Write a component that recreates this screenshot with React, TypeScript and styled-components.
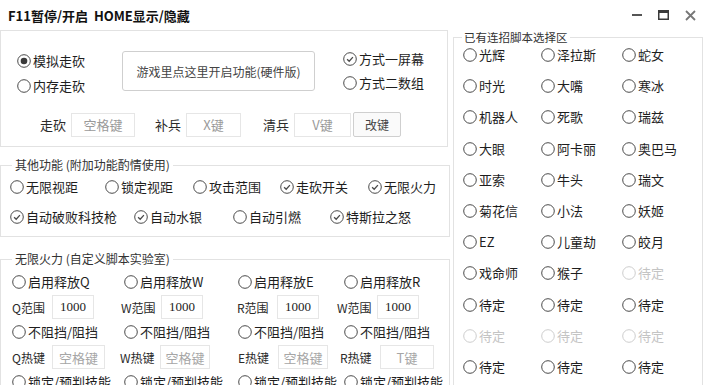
import { FC } from "react";
import styled, { createGlobalStyle } from "styled-components";

type Mark = "none" | "dot" | "check";

interface OptionProps {
  text: string;
  mark?: Mark;
  muted?: boolean;
  width?: number;
}

const heroes: { name: string; muted?: boolean }[] = [
  { name: "光辉" }, { name: "泽拉斯" }, { name: "蛇女" },
  { name: "时光" }, { name: "大嘴" }, { name: "寒冰" },
  { name: "机器人" }, { name: "死歌" }, { name: "瑞兹" },
  { name: "大眼" }, { name: "阿卡丽" }, { name: "奥巴马" },
  { name: "亚索" }, { name: "牛头" }, { name: "瑞文" },
  { name: "菊花信" }, { name: "小法" }, { name: "妖姬" },
  { name: "EZ" }, { name: "儿童劫" }, { name: "皎月" },
  { name: "戏命师" }, { name: "猴子" }, { name: "待定", muted: true },
  { name: "待定" }, { name: "待定" }, { name: "待定" },
  { name: "待定", muted: true }, { name: "待定", muted: true }, { name: "待定", muted: true },
  { name: "待定" }, { name: "待定" }, { name: "待定" },
];

const skills = ["Q", "W", "E", "R"];
const ranges = [
  { label: "Q范围", shift: 0 },
  { label: "W范围", shift: -3 },
  { label: "R范围", shift: -1 },
  { label: "W范围", shift: -7 },
];
const hotkeys = [
  { label: "Q热键", value: "空格键", shift: 0, width: 53 },
  { label: "W热键", value: "空格键", shift: -4, width: 50 },
  { label: "E热键", value: "空格键", shift: 0, width: 50 },
  { label: "R热键", value: "T键", shift: -4, width: 54 },
];

const RadioIcon: FC<{ mark: Mark; muted?: boolean }> = ({ mark, muted }) => {
  const stroke = muted ? "#cdcdcd" : "#4a4a4a";
  return (
    <svg width="14" height="14" viewBox="0 0 14 14">
      <circle cx="7" cy="7" r="6.3" fill="#fff" stroke={stroke} strokeWidth="1" />
      {mark === "dot" && <circle cx="7" cy="7" r="3.3" fill="#3a3a3a" />}
      {mark === "check" && (
        <path d="M4.1 7.2 L6.2 9.2 L9.9 5.1" fill="none" stroke="#4a4a4a" strokeWidth="1.3" />
      )}
    </svg>
  );
};

const Option: FC<OptionProps> = ({ text, mark = "none", muted, width }) => {
  return (
    <OptionLabel $muted={muted} $width={width}>
      <RadioIcon mark={mark} muted={muted} />
      <span>{text}</span>
    </OptionLabel>
  );
};

const WindowControls: FC = () => {
  return (
    <Controls>
      <svg width="10" height="10" viewBox="0 0 10 10">
        <rect x="0" y="4" width="10" height="2" fill="#555" />
      </svg>
      <svg width="11" height="10" viewBox="0 0 11 10">
        <rect x="0.75" y="0.75" width="9.5" height="8.5" fill="none" stroke="#3a3a3a" strokeWidth="1.5" />
        <rect x="0" y="0" width="11" height="3" fill="#3a3a3a" />
      </svg>
      <svg width="11" height="11" viewBox="0 0 11 11">
        <path d="M1 1 L10 10 M10 1 L1 10" stroke="#777" strokeWidth="1.8" />
      </svg>
    </Controls>
  );
};

const App: FC = () => {
  return (
    <Window>
      <GlobalStyle />
      <TitleBar>
        <Title>F11暂停/开启&nbsp;&nbsp;HOME显示/隐藏</Title>
        <WindowControls />
      </TitleBar>

      <Body>
        <LeftColumn>
          <MainBox>
            <TopRow>
              <ModeColumn>
                <Option text="模拟走砍" mark="dot" />
                <Option text="内存走砍" />
              </ModeColumn>
              <BigButton>游戏里点这里开启功能(硬件版)</BigButton>
              <ChoiceColumn>
                <Option text="方式一屏幕" mark="check" />
                <Option text="方式二数组" />
              </ChoiceColumn>
            </TopRow>
            <KeyRow>
              <KeyLabel>走砍</KeyLabel>
              <KeyBox $width={64} $after={20}>空格键</KeyBox>
              <KeyLabel>补兵</KeyLabel>
              <KeyBox $width={55} $after={22}>X键</KeyBox>
              <KeyLabel>清兵</KeyLabel>
              <KeyBox $width={57} $after={2}>V键</KeyBox>
              <SmallButton>改键</SmallButton>
            </KeyRow>
          </MainBox>

          <Group $top={10}>
            <Legend>其他功能 (附加功能酌情使用)</Legend>
            <OptionRow>
              <Option text="无限视距" width={95} />
              <Option text="锁定视距" width={88} />
              <Option text="攻击范围" width={87} />
              <Option text="走砍开关" mark="check" width={88} />
              <Option text="无限火力" mark="check" />
            </OptionRow>
            <OptionRow $gap={6}>
              <Option text="自动破败科技枪" mark="check" width={124} />
              <Option text="自动水银" mark="check" width={99} />
              <Option text="自动引燃" width={97} />
              <Option text="特斯拉之怒" mark="check" />
            </OptionRow>
          </Group>

          <Group $top={14}>
            <Legend>无限火力 (自定义脚本实验室)</Legend>
            <SkillGrid>
              {skills.map((s) => (
                <Cell key={"use" + s}>
                  <Option text={"启用释放" + s} />
                </Cell>
              ))}
              {ranges.map((r, i) => (
                <Cell key={"range" + i} $shift={r.shift}>
                  <FieldLabel>{r.label}</FieldLabel>
                  <ValueBox $width={42}>1000</ValueBox>
                </Cell>
              ))}
              {skills.map((s) => (
                <Cell key={"block" + s}>
                  <Option text="不阻挡/阻挡" />
                </Cell>
              ))}
              {hotkeys.map((h, i) => (
                <Cell key={"hot" + i} $shift={h.shift}>
                  <FieldLabel>{h.label}</FieldLabel>
                  <HotBox $width={h.width}>{h.value}</HotBox>
                </Cell>
              ))}
              {skills.map((s) => (
                <Cell key={"lock" + s}>
                  <Option text="锁定/预判技能" />
                </Cell>
              ))}
            </SkillGrid>
          </Group>
        </LeftColumn>

        <ScriptGroup>
          <ScriptLegend>已有连招脚本选择区</ScriptLegend>
          <HeroGrid>
            {heroes.map((h, i) => (
              <HeroCell key={i}>
                <Option text={h.name} muted={h.muted} />
              </HeroCell>
            ))}
          </HeroGrid>
        </ScriptGroup>
      </Body>
    </Window>
  );
};

const GlobalStyle = createGlobalStyle`
  html, body {
    margin: 0;
    padding: 0;
    background: #fff;
    overflow: hidden;
  }
  body {
    font-family: "Noto Sans CJK SC", "Microsoft YaHei", sans-serif;
    font-size: 13px;
    color: #1e1e1e;
  }
`;

const Window = styled.div`
  width: 707px;
  height: 385px;
  overflow: hidden;
  background: #fff;
`;

const TitleBar = styled.div`
  height: 30px;
  display: flex;
  align-items: center;
  justify-content: space-between;
  padding: 0 11px 0 8px;
`;

const Title = styled.div`
  font-weight: bold;
  font-size: 13px;
  color: #111;
`;

const Controls = styled.div`
  display: flex;
  align-items: center;
  gap: 16px;
`;

const Body = styled.div`
  display: flex;
  align-items: flex-start;
`;

const LeftColumn = styled.div`
  width: 450px;
  display: flex;
  flex-direction: column;
`;

const MainBox = styled.div`
  box-sizing: border-box;
  height: 117px;
  margin-right: 2px;
  border: 1px solid #e2e2e2;
  padding: 18px 0 0 16px;
`;

const TopRow = styled.div`
  display: flex;
  align-items: center;
  height: 44px;
`;

const ModeColumn = styled.div`
  width: 105px;
  margin-top: 5px;
  display: flex;
  flex-direction: column;
  gap: 3px;
`;

const ChoiceColumn = styled.div`
  margin-left: 28px;
  display: flex;
  flex-direction: column;
  gap: 2px;
`;

const OptionLabel = styled.label<{ $muted?: boolean; $width?: number }>`
  display: inline-flex;
  align-items: center;
  gap: 2px;
  height: 22px;
  flex: none;
  width: ${(p) => (p.$width ? p.$width + "px" : "auto")};
  font-size: 13px;
  line-height: 16px;
  white-space: nowrap;
  color: ${(p) => (p.$muted ? "#c4c4c4" : "#1e1e1e")};
`;

const BigButton = styled.button`
  width: 193px;
  height: 40px;
  border: 1px solid #cfcfcf;
  border-radius: 3px;
  background: #fff;
  font-family: inherit;
  font-size: 12px;
  color: #444;
  padding: 0;
`;

const KeyRow = styled.div`
  display: flex;
  align-items: center;
  height: 25px;
  margin-top: 19px;
  padding-left: 23px;
`;

const KeyLabel = styled.span`
  width: 31px;
  font-size: 13px;
  color: #2a2a2a;
`;

const KeyBox = styled.div<{ $width: number; $after: number }>`
  box-sizing: border-box;
  width: ${(p) => p.$width}px;
  height: 24px;
  margin-right: ${(p) => p.$after}px;
  border: 1px solid #e6e6e6;
  display: flex;
  align-items: center;
  justify-content: center;
  font-size: 13px;
  color: #9a9a9a;
`;

const SmallButton = styled.button`
  width: 48px;
  height: 25px;
  border: 1px solid #cfcfcf;
  border-radius: 2px;
  background: #fafafa;
  font-family: inherit;
  font-size: 12px;
  color: #444;
  padding: 0;
`;

const Group = styled.fieldset<{ $top: number }>`
  margin: ${(p) => p.$top}px 0 0 0;
  padding: 0 0 7px 0;
  border: 1px solid #e2e2e2;
  min-width: 0;
`;

const Legend = styled.legend`
  margin-left: 11px;
  padding: 0 3px;
  font-size: 12px;
  line-height: 16px;
  color: #333;
`;

const OptionRow = styled.div<{ $gap?: number }>`
  display: flex;
  align-items: center;
  height: 24px;
  margin-top: ${(p) => p.$gap ?? 2}px;
  padding-left: 9px;
`;

const SkillGrid = styled.div`
  display: grid;
  grid-template-columns: 112px 114px 106px 1fr;
  grid-auto-rows: 24px;
  row-gap: 1px;
  padding: 3px 0 0 11px;
`;

const Cell = styled.div<{ $shift?: number }>`
  display: flex;
  align-items: center;
  margin-left: ${(p) => p.$shift ?? 0}px;
`;

const FieldLabel = styled.span`
  width: 40px;
  flex: none;
  font-size: 12px;
  color: #2a2a2a;
`;

const ValueBox = styled.div<{ $width: number }>`
  box-sizing: border-box;
  width: ${(p) => p.$width}px;
  height: 24px;
  border: 1px solid #e6e6e6;
  display: flex;
  align-items: center;
  justify-content: center;
  font-family: "Liberation Serif", serif;
  font-size: 13px;
  color: #222;
`;

const HotBox = styled(ValueBox)`
  font-family: "Noto Sans CJK SC", sans-serif;
  color: #a6a6a6;
`;

const ScriptGroup = styled.fieldset`
  box-sizing: border-box;
  width: 250px;
  height: 370px;
  margin: 1px 0 0 3px;
  padding: 0 0 0 9px;
  border: 1px solid #e2e2e2;
  min-width: 0;
`;

const ScriptLegend = styled.legend`
  margin-left: -1px;
  padding: 0 2px;
  font-size: 11.5px;
  line-height: 13px;
  color: #333;
`;

const HeroGrid = styled.div`
  display: grid;
  grid-template-columns: 78px 81px 1fr;
  grid-auto-rows: 31.2px;
  padding-top: 3px;
`;

const HeroCell = styled.div`
  height: 16px;
  display: flex;
  align-items: center;
`;

export default App;
